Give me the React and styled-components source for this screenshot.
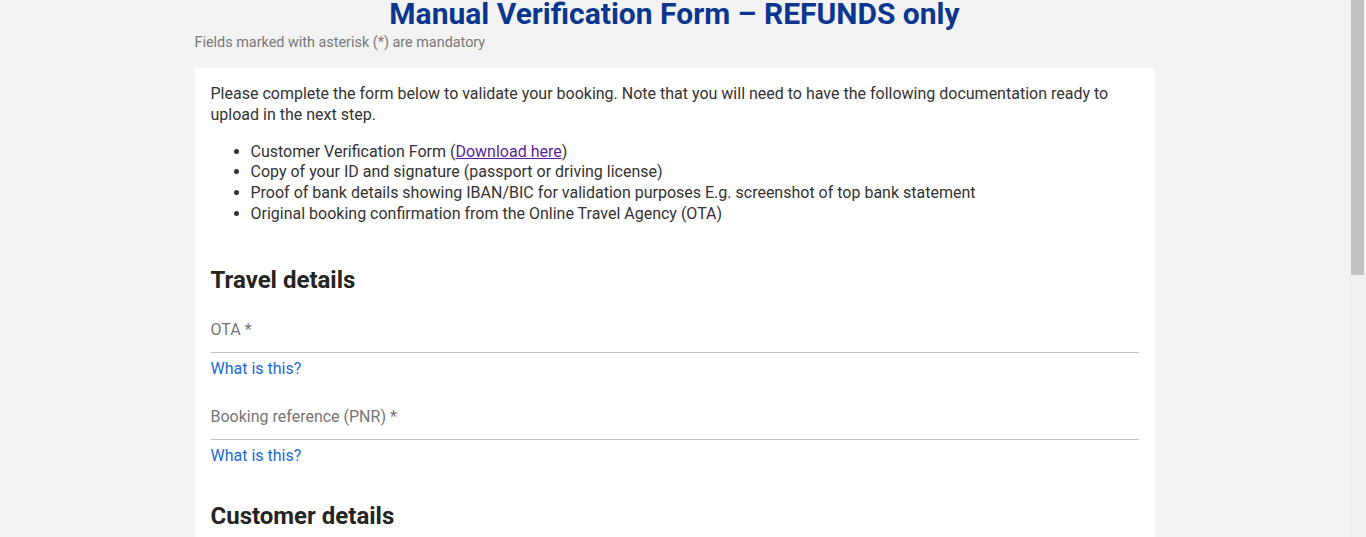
import React from "react";
import styled, { createGlobalStyle } from "styled-components";

const Global = createGlobalStyle`
  html, body { height: 100%; }
  body {
    margin: 0;
    overflow: hidden;
    background: #f3f3f3;
    font-family: Roboto, "Liberation Sans", Arial, sans-serif;
    color: #333;
  }
`;

const Shell = styled.div`
  display: flex;
  height: 100vh;
  overflow: hidden;
`;

const Viewport = styled.div`
  flex: 1;
  min-width: 0;
  overflow: hidden;
  background: #f3f3f3;
`;

const ScrollTrack = styled.div`
  flex: 0 0 17px;
  display: flex;
  flex-direction: column;
  padding: 0 2px;
  box-sizing: border-box;
  background: #f1f1f1;
`;

const ScrollThumb = styled.div`
  height: 275px;
  background: #c1c1c1;
`;

const Page = styled.div`
  width: 960px;
  margin: 0 auto;
  padding-bottom: 20px;
`;

const Title = styled.h1`
  margin: 0;
  font-size: 30px;
  line-height: 28px;
  font-weight: 700;
  color: #0a368f;
  text-align: center;
`;

const Subtitle = styled.p`
  margin: 7px 0 17px;
  font-size: 14.4px;
  line-height: 16px;
  color: #777;
`;

const Card = styled.main`
  background: #fff;
  padding: 16px 16px 40px;
`;

const Intro = styled.p`
  margin: 0 0 16px;
  font-size: 16px;
  line-height: 20.8px;
  color: #333;
`;

const DocList = styled.ul`
  margin: 0;
  padding-left: 40px;
  font-size: 16px;
  line-height: 20.8px;
  color: #333;
`;

const DocLink = styled.a`
  color: #5b1f96;
  text-decoration: underline;
`;

const Section = styled.section`
  margin-top: 40px;

  & + & {
    margin-top: 35px;
  }
`;

const SectionTitle = styled.h2`
  margin: 0 0 23px;
  font-size: 24px;
  line-height: 31.2px;
  font-weight: 700;
  color: #242424;
`;

const Fields = styled.div`
  display: flex;
  flex-direction: column;
  gap: 27px;
`;

const Field = styled.div`
  display: flex;
  flex-direction: column;
`;

const Label = styled.label`
  font-size: 16px;
  line-height: 21px;
  color: #757575;
`;

const InputLine = styled.div`
  height: 12px;
  border-bottom: 1px solid #c6c6c6;
`;

const Help = styled.a`
  margin-top: 6px;
  font-size: 16px;
  line-height: 20px;
  color: #1b6ad3;
  text-decoration: none;
  align-self: flex-start;
`;

const travelFields = [
  { label: "OTA *", help: true },
  { label: "Booking reference (PNR) *", help: true },
];

const customerFields = [
  { label: "First name *" },
  { label: "Last name *" },
  { label: "Email address *" },
  { label: "Phone number *" },
];

function FormField({ label, help }) {
  return (
    <Field>
      <Label>{label}</Label>
      <InputLine />
      {help && <Help href="#">What is this?</Help>}
    </Field>
  );
}

export default function App() {
  return (
    <>
      <Global />
      <Shell>
        <Viewport>
          <Page>
            <Title>Manual Verification Form – REFUNDS only</Title>
            <Subtitle>Fields marked with asterisk (*) are mandatory</Subtitle>
            <Card>
              <Intro>
                Please complete the form below to validate your booking. Note that you will need to have
                the following documentation ready to upload in the next step.
              </Intro>
              <DocList>
                <li>
                  Customer Verification Form (<DocLink href="#">Download here</DocLink>)
                </li>
                <li>Copy of your ID and signature (passport or driving license)</li>
                <li>
                  Proof of bank details showing IBAN/BIC for validation purposes E.g. screenshot of top
                  bank statement
                </li>
                <li>Original booking confirmation from the Online Travel Agency (OTA)</li>
              </DocList>
              <Section>
                <SectionTitle>Travel details</SectionTitle>
                <Fields>
                  {travelFields.map((f) => (
                    <FormField key={f.label} {...f} />
                  ))}
                </Fields>
              </Section>
              <Section>
                <SectionTitle>Customer details</SectionTitle>
                <Fields>
                  {customerFields.map((f) => (
                    <FormField key={f.label} {...f} />
                  ))}
                </Fields>
              </Section>
            </Card>
          </Page>
        </Viewport>
        <ScrollTrack>
          <ScrollThumb />
        </ScrollTrack>
      </Shell>
    </>
  );
}
